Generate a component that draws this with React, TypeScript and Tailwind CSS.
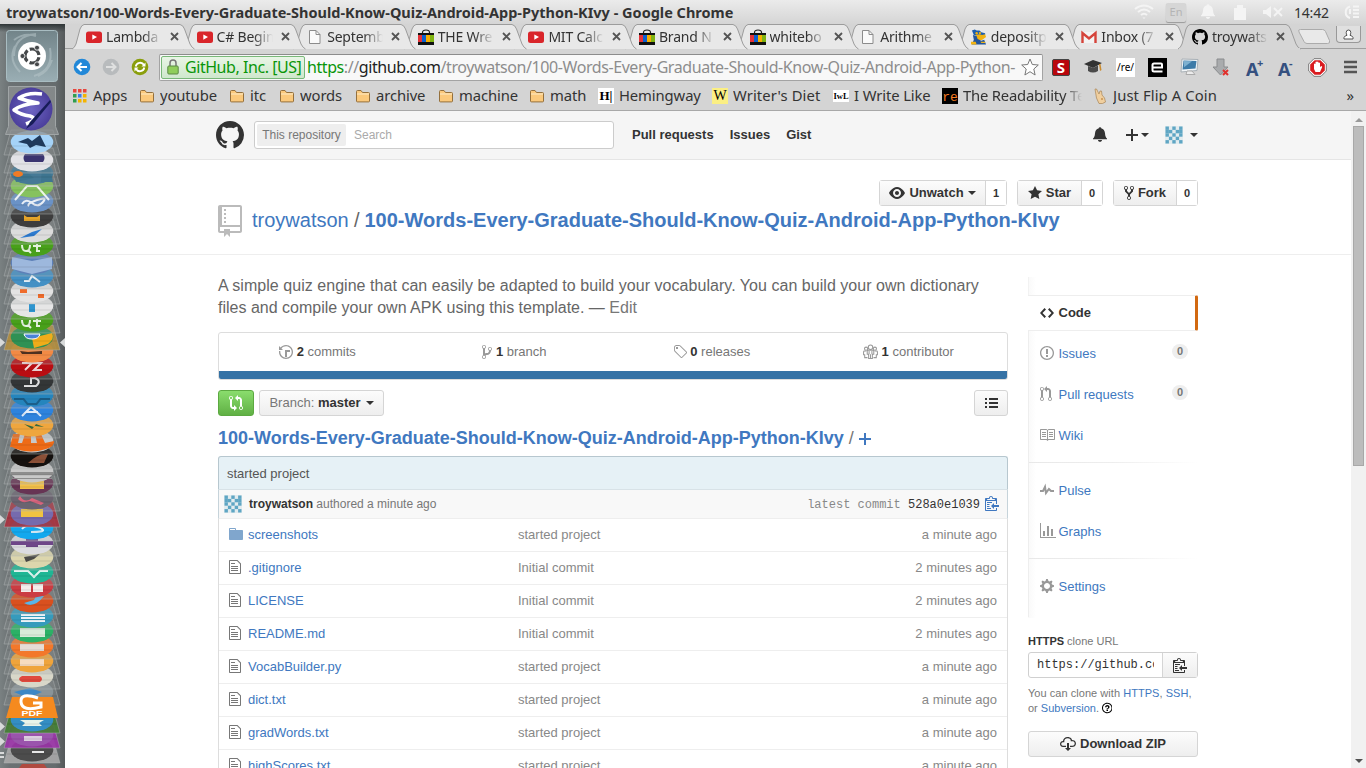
import React from "react";

const P = {
  mark: "M8 0C3.58 0 0 3.58 0 8c0 3.54 2.29 6.53 5.47 7.59.4.07.55-.17.55-.38 0-.19-.01-.82-.01-1.49-2.01.37-2.53-.49-2.69-.94-.09-.23-.48-.94-.82-1.13-.28-.15-.68-.52-.01-.53.63-.01 1.08.58 1.23.82.72 1.21 1.87.87 2.33.66.07-.52.28-.87.51-1.07-1.78-.2-3.64-.89-3.64-3.95 0-.87.31-1.59.82-2.15-.08-.2-.36-1.02.08-2.12 0 0 .67-.21 2.2.82.64-.18 1.32-.27 2-.27.68 0 1.36.09 2 .27 1.53-1.04 2.2-.82 2.2-.82.44 1.1.16 1.92.08 2.12.51.56.82 1.27.82 2.15 0 3.07-1.87 3.75-3.65 3.95.29.25.54.73.54 1.48 0 1.07-.01 1.93-.01 2.2 0 .21.15.46.55.38A8.013 8.013 0 0 0 16 8c0-4.42-3.58-8-8-8z",
  repo: "M4 9H3V8h1v1zm0-3H3v1h1V6zm0-2H3v1h1V4zm0-2H3v1h1V2zm8-1v12c0 .55-.45 1-1 1H6v2l-1.5-1.5L3 16v-2H1c-.55 0-1-.45-1-1V1c0-.55.45-1 1-1h10c.55 0 1 .45 1 1zm-1 10H1v2h2v-1h3v1h5v-2zm0-10H2v9h9V1z",
  eye: "M8.06 2C3 2 0 8 0 8s3 6 8.06 6C13 14 16 8 16 8s-3-6-7.94-6zM8 12c-2.2 0-4-1.78-4-4 0-2.2 1.8-4 4-4 2.22 0 4 1.8 4 4 0 2.22-1.78 4-4 4zm2-4c0 1.11-.89 2-2 2-1.11 0-2-.89-2-2 0-1.11.89-2 2-2 1.11 0 2 .89 2 2z",
  star: "M14 6l-4.9-.64L7 1 4.9 5.36 0 6l3.6 3.26L2.67 14 7 11.67 11.33 14l-.93-4.74z",
  fork: "M8 1a1.993 1.993 0 0 0-1 3.72V6L5 8 3 6V4.72A1.993 1.993 0 0 0 2 1a1.993 1.993 0 0 0-1 3.72V6.5l3 3v1.78A1.993 1.993 0 0 0 5 15a1.993 1.993 0 0 0 1-3.72V9.5l3-3V4.72A1.993 1.993 0 0 0 8 1zM2 4.2C1.34 4.2.8 3.65.8 3c0-.65.55-1.2 1.2-1.2.65 0 1.2.55 1.2 1.2 0 .65-.55 1.2-1.2 1.2zm3 10c-.66 0-1.2-.55-1.2-1.2 0-.65.55-1.2 1.2-1.2.65 0 1.2.55 1.2 1.2 0 .65-.55 1.2-1.2 1.2zm3-10c-.66 0-1.2-.55-1.2-1.2 0-.65.55-1.2 1.2-1.2.65 0 1.2.55 1.2 1.2 0 .65-.55 1.2-1.2 1.2z",
  bell: "M0 12.2v-.8c1.2-1 1.8-2.2 2-5.2C2.2 3.4 3.6 1.9 5.5 1.4 5.7.6 6.2.2 7 .2s1.3.4 1.5 1.2C10.4 1.9 11.8 3.4 12 6.2c.2 3 .8 4.2 2 5.2v.8zM5 13h4c0 1-.8 1.8-2 1.8S5 14 5 13z",
  plus: "M12 9H7v5H5V9H0V7h5V2h2v5h5v2z",
  branch: "M10 5c0-1.11-.89-2-2-2a1.993 1.993 0 0 0-1 3.72v.3c-.02.52-.23.98-.63 1.38-.4.4-.86.61-1.38.63-.83.02-1.48.16-2 .45V4.72a1.993 1.993 0 0 0-1-3.72C.88 1 0 1.89 0 3a2 2 0 0 0 1 1.72v6.56c-.59.35-1 .99-1 1.72 0 1.11.89 2 2 2 1.11 0 2-.89 2-2 0-.53-.2-1-.53-1.36.09-.06.48-.41.59-.47.25-.11.56-.17.94-.17 1.05-.05 1.95-.45 2.75-1.25S8.95 7.77 9 6.73h-.02C9.59 6.37 10 5.73 10 5zM2 1.8c.66 0 1.2.55 1.2 1.2 0 .65-.55 1.2-1.2 1.2C1.35 4.2.8 3.65.8 3c0-.65.55-1.2 1.2-1.2zm0 12.41c-.66 0-1.2-.55-1.2-1.2 0-.65.55-1.2 1.2-1.2.65 0 1.2.55 1.2 1.2 0 .65-.55 1.2-1.2 1.2zm6-8c-.66 0-1.2-.55-1.2-1.2 0-.65.55-1.2 1.2-1.2.65 0 1.2.55 1.2 1.2 0 .65-.55 1.2-1.2 1.2z",
  pull: "M11 11.28V5c-.03-.78-.34-1.47-.94-2.06C9.46 2.35 8.78 2.03 8 2H7V0L4 3l3 3V4h1c.27.02.48.11.69.31.21.2.3.42.31.69v6.28A1.993 1.993 0 0 0 10 15a1.993 1.993 0 0 0 1-3.72zm-1 2.92c-.66 0-1.2-.55-1.2-1.2 0-.65.55-1.2 1.2-1.2.65 0 1.2.55 1.2 1.2 0 .65-.55 1.2-1.2 1.2zM4 3c0-1.11-.89-2-2-2a1.993 1.993 0 0 0-1 3.72v6.56A1.993 1.993 0 0 0 2 15a1.993 1.993 0 0 0 1-3.72V4.72c.59-.34 1-.98 1-1.72zm-.8 10c0 .66-.55 1.2-1.2 1.2-.65 0-1.2-.55-1.2-1.2 0-.65.55-1.2 1.2-1.2.65 0 1.2.55 1.2 1.2zM2 4.2C1.34 4.2.8 3.65.8 3c0-.65.55-1.2 1.2-1.2.65 0 1.2.55 1.2 1.2 0 .65-.55 1.2-1.2 1.2z",
  compare: "M5 12H4c-.27-.02-.48-.11-.69-.31-.21-.2-.3-.42-.31-.69V4.72A1.993 1.993 0 0 0 2 1a1.993 1.993 0 0 0-1 3.72V11c.03.78.34 1.47.94 2.06.6.59 1.28.91 2.06.94h1v2l3-3-3-3v2zM2 1.8c.66 0 1.2.55 1.2 1.2 0 .65-.55 1.2-1.2 1.2C1.35 4.2.8 3.65.8 3c0-.65.55-1.2 1.2-1.2zm11 9.48V5c-.03-.78-.34-1.47-.94-2.06-.6-.59-1.28-.91-2.06-.94H9V0L6 3l3 3V4h1c.27.02.48.11.69.31.21.2.3.42.31.69v6.28A1.993 1.993 0 0 0 12 15a1.993 1.993 0 0 0 1-3.72zm-1 2.92c-.66 0-1.2-.55-1.2-1.2 0-.65.55-1.2 1.2-1.2.65 0 1.2.55 1.2 1.2 0 .65-.55 1.2-1.2 1.2z",
  tag: "M7.73 1.73C7.26 1.26 6.62 1 5.96 1H3.5C2.13 1 1 2.13 1 3.5v2.47c0 .66.27 1.3.73 1.77l6.06 6.06c.39.39 1.02.39 1.41 0l4.59-4.59a.996.996 0 0 0 0-1.41L7.73 1.73zM2.38 7.09c-.31-.3-.47-.7-.47-1.13V3.5c0-.88.72-1.59 1.59-1.59h2.47c.42 0 .83.16 1.13.47l6.14 6.13-4.73 4.73-6.13-6.15zM3.01 3h2v2H3V3h.01z",
  list: "M0 3h2v2H0zM4 3h9v2H4zM0 7h2v2H0zM4 7h9v2H4zM0 11h2v2H0zM4 11h9v2H4z",
  file: "M6 5H2V4h4v1zM2 8h7V7H2v1zm0 2h7V9H2v1zm0 2h7v-1H2v1zm10-7.5V14c0 .55-.45 1-1 1H1c-.55 0-1-.45-1-1V2c0-.55.45-1 1-1h7.5L12 4.5zM11 5L8 2H1v12h10V5z",
  dir: "M13 4H7V3c0-.66-.31-1-1-1H1c-.55 0-1 .45-1 1v10c0 .55.45 1 1 1h12c.55 0 1-.45 1-1V5c0-.55-.45-1-1-1zM6 4H1V3h5v1z",
  code: "M9.5 3L8 4.5 11.5 8 8 11.5 9.5 13 14 8 9.5 3zm-5 0L0 8l4.5 5L6 11.5 2.5 8 6 4.5 4.5 3z",
  issue: "M7 2.3c3.14 0 5.7 2.56 5.7 5.7s-2.56 5.7-5.7 5.7A5.71 5.71 0 0 1 1.3 8c0-3.14 2.56-5.7 5.7-5.7zM7 1C3.14 1 0 4.14 0 8s3.14 7 7 7 7-3.14 7-7-3.14-7-7-7zm1 3H6v5h2V4zm0 6H6v2h2v-2z",
  book: "M2 5h4v1H2V5zm0 3h4V7H2v1zm0 2h4V9H2v1zm11-5H9v1h4V5zm0 2H9v1h4V7zm0 2H9v1h4V9zm2-6v9c0 .55-.45 1-1 1H8.5l-1 1-1-1H1c-.55 0-1-.45-1-1V3c0-.55.45-1 1-1h5.5l1 1 1-1H14c.55 0 1 .45 1 1zm-8 .5L6.5 3H1v9h6V3.5zm7-.5H8.500l-.5.5V12h6V3z",
  pulse: "M11.5 8L8.8 5.4 6.6 8.5 5.5 1.6 2.38 8H0v2h3.6l.9-1.8.9 5.4L9 8.5l1.6 1.5H14V8h-2.5z",
  graph: "M16 14v1H0V0h1v14h15zM5 13H3V8h2v5zm4 0H7V3h2v10zm4 0h-2V6h2v7z",
  gear: "M14 8.77v-1.6l-1.94-.64-.45-1.09.88-1.84-1.13-1.13-1.81.91-1.09-.45-.69-1.92h-1.6l-.63 1.94-1.11.45-1.84-.88-1.13 1.13.91 1.81-.45 1.09L0 7.23v1.59l1.94.64.45 1.09-.88 1.84 1.13 1.13 1.81-.91 1.09.45.69 1.92h1.59l.63-1.94 1.11-.45 1.84.88 1.13-1.13-.92-1.81.47-1.09L14 8.75v.02zM7 11c-1.66 0-3-1.34-3-3s1.34-3 3-3 3 1.34 3 3-1.34 3-3 3z",
  clippy: "M2 13h4v1H2v-1zm5-6H2v1h5V7zm2 3V8l-3 3 3 3v-2h5v-2H9zM4.5 9H2v1h2.5V9zM2 12h2.5v-1H2v1zm9 1h1v2c-.02.28-.11.52-.3.7-.19.18-.42.28-.7.3H1c-.55 0-1-.45-1-1V4c0-.55.45-1 1-1h3c0-1.11.89-2 2-2 1.11 0 2 .89 2 2h3c.55 0 1 .45 1 1v5h-1V6H1v9h10v-2zM2 5h8c0-.55-.45-1-1-1H8c-.55 0-1-.45-1-1s-.45-1-1-1-1 .45-1 1-.45 1-1 1H3c-.55 0-1 .45-1 1z",
  cloud: "M9 12h2l-3 3-3-3h2V7h2v5zm3-8c0-.44-.91-3-4.5-3C5.08 1 3 2.92 3 5 1.02 5 0 6.52 0 8c0 1.53 1 3 3 3h3V9.7H3C1.38 9.7 1.3 8.28 1.3 8c0-.17.05-1.7 1.7-1.7h1.3V5c0-1.39 1.56-2.7 3.2-2.7 2.55 0 3.13 1.55 3.2 1.8v1.2H12c.81 0 2.7.22 2.7 2.2 0 2.09-2.25 2.2-2.7 2.2h-2V11h2c2.08 0 4-1.16 4-3.5C16 5.06 14.08 4 12 4z",
  question: "M6 10h2v2H6v-2zm4-3.5C10 8.64 8 9 8 9H6c0-.55.45-1 1-1h.5c.28 0 .5-.22.5-.5v-1c0-.28-.22-.5-.5-.5h-1c-.28 0-.5.22-.5.5V7H4c0-1.5 1.5-3 3-3s3 1 3 2.5zM7 2.3c3.14 0 5.7 2.56 5.7 5.7s-2.56 5.7-5.7 5.7A5.71 5.71 0 0 1 1.3 8c0-3.14 2.56-5.7 5.7-5.7zM7 1C3.14 1 0 4.14 0 8s3.14 7 7 7 7-3.14 7-7-3.14-7-7-7z",
  history: "M8 13H6V6h5v2H8v5zM7 1C4.81 1 2.87 2.02 1.59 3.59L0 2v4h4L2.5 4.5C3.55 3.17 5.17 2.3 7 2.3c3.14 0 5.7 2.56 5.7 5.7s-2.56 5.7-5.7 5.7A5.71 5.71 0 0 1 1.3 8c0-.34.03-.67.09-1H.08C.03 7.33 0 7.66 0 8c0 3.86 3.14 7 7 7s7-3.14 7-7-3.14-7-7-7z",
};

function Oct({ d, w = 14, s = 1, className = "" }: { d: string; w?: number; s?: number; className?: string }) {
  return (
    <svg width={w * s} height={16 * s} viewBox={`0 0 ${w} 16`} fill="currentColor" className={`shrink-0 ${className}`}>
      <path d={d} fillRule="evenodd" />
    </svg>
  );
}

function People() {
  return (
    <svg width="15" height="16" viewBox="0 0 16 16" fill="none" stroke="#999" strokeWidth="1.1" className="shrink-0">
      <circle cx="8" cy="3" r="2.4" />
      <circle cx="3.3" cy="4.5" r="1.7" />
      <circle cx="12.7" cy="4.5" r="1.7" />
      <path d="M4.5 10.5V7q0-1 1.5-1h4q1.5 0 1.5 1v3.5H10V15H6v-4.5zM8 10.5V15M6.5 7v3.5M9.5 7v3.5M3.5 7H1.500Q.6 7 .6 8v3h1.200v3h3M12.500 7h2q.9 0 .9 1v3h-1.200v3h-3" />
    </svg>
  );
}

function Caret() {
  return <span className="inline-block border-x-4 border-t-4 border-x-transparent border-t-[#333]" />;
}

const avatar = ["10101", "11011", "10101", "01010", "10101"];
function Identicon() {
  return (
    <svg width="18" height="18" viewBox="0 0 18 18">
      <rect width="18" height="18" fill="#e3ecef" />
      <g fill="#5fa6c4">
        {avatar.map((r, y) =>
          r.split("").map((c, x) => (c === "1" ? <rect key={`${x}-${y}`} x={0.5 + x * 3.4} y={0.5 + y * 3.4} width="3.4" height="3.4" /> : null))
        )}
      </g>
    </svg>
  );
}

/* ---------- favicons ---------- */
function YouTube() {
  return (
    <svg width="16" height="16" viewBox="0 0 16 16">
      <rect x="0" y="2.5" width="16" height="11.5" rx="2.5" fill="#d9252a" />
      <path d="M6.3 5.5v5.2L11 8.1z" fill="#fff" />
    </svg>
  );
}
function Page() {
  return (
    <svg width="16" height="16" viewBox="0 0 16 16" fill="#fafafa" stroke="#8c8c8c">
      <path d="M2.5 1.5H9l4 4v9H2.500z" />
      <path d="M9 1.5v4h4" fill="none" />
    </svg>
  );
}
function Bag() {
  return (
    <svg width="16" height="16" viewBox="0 0 16 16">
      <path d="M4.5 5V3.5Q4.5 1 8 1t3.5 2.5V5" fill="none" stroke="#222" strokeWidth="1.2" />
      <rect y="4" width="16" height="2" fill="#111" />
      <rect y="6" width="4" height="7" fill="#e53238" />
      <rect x="4" y="6" width="4" height="7" fill="#0a5fd0" />
      <rect x="8" y="6" width="4" height="7" fill="#f5af02" />
      <rect x="12" y="6" width="4" height="7" fill="#7fb311" />
      <rect y="13" width="16" height="3" fill="#111" />
    </svg>
  );
}
function HostGator() {
  return (
    <svg width="16" height="16" viewBox="0 0 17 16">
      <path d="M1 1l3-1 2 1h3l2 2 4 1v2l-7 1-5-1z" fill="#1c5fb0" />
      <path d="M5 6l4-1 3 1 3-1 1 3-4 3-5 1z" fill="#f2b311" />
      <path d="M2 6l4 1 1 3 4 2 3-1 2 5H1l2-5z" fill="#24569c" />
      <path d="M0 13h5l1 3H0zM10 13h5v1.500h-4z" fill="#f2b311" />
      <circle cx="6" cy="4" r="1.3" fill="#f2b311" />
      <circle cx="9.5" cy="3.8" r="1.2" fill="#f2b311" />
    </svg>
  );
}
function Gmail() {
  return (
    <svg width="16" height="16" viewBox="0 0 16 16">
      <rect x="1" y="3" width="14" height="11" fill="#f3f3f3" />
      <path d="M1.5 14V4L8 9.5 14.5 4v10" fill="none" stroke="#d5433a" strokeWidth="2.4" />
    </svg>
  );
}

const tabs: { icon: React.ReactNode; label: string }[] = [
  { icon: <YouTube />, label: "Lambda" },
  { icon: <YouTube />, label: "C# Begin" },
  { icon: <Page />, label: "Septemb" },
  { icon: <Bag />, label: "THE Wre" },
  { icon: <YouTube />, label: "MIT Calc" },
  { icon: <Bag />, label: "Brand N" },
  { icon: <Bag />, label: "whitebo" },
  { icon: <Page />, label: "Arithme" },
  { icon: <HostGator />, label: "depositp" },
  { icon: <Gmail />, label: "Inbox (7" },
  { icon: <Oct d={P.mark} w={16} className="text-black" />, label: "troywats" },
];
const Z = ["z-[11]", "z-10", "z-[9]", "z-[8]", "z-[7]", "z-[6]", "z-[5]", "z-[4]", "z-[3]", "z-[2]", "z-20"];

function Tab({ i, icon, label }: { i: number; icon: React.ReactNode; label: string }) {
  const active = i === 10;
  return (
    <div className={`relative h-[25px] w-[110.6px] shrink-0 ${Z[i]}`}>
      <svg className="absolute left-0 top-0 overflow-visible" width="124" height="25">
        <path
          d="M0 25 Q2.5 24 4 20 L8 5 Q9.5 1 12 .5 H108 Q111 1 112.5 5 L118 20 Q120 24 122.5 25"
          fill={active ? "#d6d6d6" : "#e8e8e8"}
          stroke="#9c9c9c"
        />
        {active && <path d="M1 25h121" stroke="#d6d6d6" strokeWidth="2" />}
      </svg>
      <div className="relative flex h-full items-center pl-[14px]">
        {icon}
        <span className="ml-1 w-[56px] overflow-hidden whitespace-nowrap tracking-[-0.2px] [mask-image:linear-gradient(to_right,#000_65%,transparent)]">{label}</span>
        <svg width="9" height="9" viewBox="0 0 9 9" className="ml-[8px]">
          <path d="M1 1l7 7M8 1L1 8" stroke="#555" strokeWidth="1.8" />
        </svg>
      </div>
    </div>
  );
}

function Folder() {
  return (
    <svg width="16" height="16" viewBox="0 0 16 16">
      <path d="M1.5 13V3.5q0-1 1-1H6l1.5 2h6q1 0 1 1V13q0 .9-1 .9h-11q-1 0-1-.9z" fill="#fbc97c" stroke="#94703d" />
      <path d="M2 6h12" stroke="#fdebc8" />
    </svg>
  );
}
function AppsIcon() {
  const c = ["#e8453c", "#e8453c", "#e8453c", "#2f9e4f", "#3b7ded", "#f4b400", "#2f9e4f", "#f4b400", "#f4b400"];
  return (
    <svg width="14" height="14" viewBox="0 0 14 14" className="ml-px">
      {c.map((f, i) => (
        <rect key={i} x={(i % 3) * 5} y={Math.floor(i / 3) * 5} width="3.5" height="3.5" fill={f} />
      ))}
    </svg>
  );
}
const bookmarks: { icon: React.ReactNode; label: string; w: string; t?: string }[] = [
  { icon: <AppsIcon />, label: "Apps", w: "w-[67px]" },
  { icon: <Folder />, label: "youtube", w: "w-[90px]" },
  { icon: <Folder />, label: "itc", w: "w-[50px]" },
  { icon: <Folder />, label: "words", w: "w-[76px]" },
  { icon: <Folder />, label: "archive", w: "w-[83px]" },
  { icon: <Folder />, label: "machine", w: "w-[91px]" },
  { icon: <Folder />, label: "math", w: "w-[69px]" },
  { icon: <span className="block h-4 w-4 bg-white text-center font-[Liberation_Serif,serif] text-[13px] font-bold leading-4 text-black">H|</span>, label: "Hemingway", w: "w-[114px]" },
  { icon: <span className="block h-4 w-4 bg-[#fbef84] text-center font-[Liberation_Serif,serif] text-[14px] leading-4 text-black">W</span>, label: "Writer's Diet", w: "w-[121px]", t: "tracking-[0.1px]" },
  { icon: <span className="block h-3 w-4 bg-white text-center font-[Liberation_Serif,serif] text-[8.5px] font-bold leading-3 text-black">IwL</span>, label: "I Write Like", w: "w-[109px]" },
  { icon: <span className="block h-4 w-4 bg-black pt-1 text-center font-[Liberation_Mono,monospace] text-[13px] leading-3 text-[#f47a20]">re</span>, label: "The Readability Te", w: "w-[150px]", t: "tracking-[-0.2px] [mask-image:linear-gradient(to_right,#000_85%,transparent)]" },
  {
    icon: (
      <svg width="16" height="16" viewBox="0 0 16 16">
        <path d="M3 1l1.5 0L7 6l1-3 1.5 0 .5 4 2.5 3 1 4-3 1.5H7L4.5 10z" fill="#f0cf9f" stroke="#a98556" strokeWidth=".7" />
        <circle cx="10" cy="11" r="1" fill="#c9924f" />
      </svg>
    ),
    label: "Just Flip A Coin",
    w: "w-[140px]",
    t: "tracking-[0.1px]",
  },
];

/* ---------- Unity launcher: [centre y, fill, "art path|art fill", glow] ---------- */
const stack: [number, string, string, string?][] = [
  [142, "#a5d3f8", "M18 142l10-4 4 3 8-6 6 12-10-2-6 3-3-4z|#1f3a5c"],
  [160, "#e2e2e6", "M25 154h18q3 4 0 8H25q-3-4 0-8z|#3a3470"],
  [173, "#467a96", "M12 170h12l10 8-18 4zM42 168h8l3 14H41z|#3e7590"],
  [186, "#86c25f", "M15 200l12-14h10l12 14|none"],
  [201, "#6a92c6", "M22 204q4-6 10-1t11-1-6-2-8 6|none"],
  [216, "#3d3d3d", "M24 215l3 2h10l3-2v6H24z|#e6a52a"],
  [231, "#dcdcdc", "M20 238l12-6 10-3-8 7z|#2d7bd0"],
  [245, "#48a01a", "M22 245q0 6 4 6t4-6M28 250l3 3M33 246h8M37 244v7h3|none"],
  [263, "#5d80b8", "M12 257l20 4 20-4v12l-20 5-20-5z|#9db8dd"],
  [276, "#4390c4", "M24 281h5l3-5 8 6|none"],
  [291, "#e3e3e3", "M20 289h7v4h-7zM38 294h6v4h-6z|#ef6c2c"],
  [306, "#e6e6e6", "M29 304h6v8h-6z|#2f95cf"],
  [320, "#48a01a", "M22 320q0 6 4 6t4-6M28 325l3 3M33 321h8M37 319v7h3|none"],
  [337, "#2f9154", "M32 338L52 333q3 6-4 11l-14 4z|#f0ac1a", "#b58f3f"],
  [351, "#f28a45", "M20 351l8 1 14-1v3H22z|#4d3020"],
  [366, "#b90d12", "M22 363h10l-7 7M33 363h8l-7 7h8|none"],
  [381, "#333637", "M24 386h12q6-5-1-8h-4v6|none"],
  [395, "#2585bd", "M14 398h10l4 5h8l4-5h10v2H41l-4 5H27l-4-5h-9z|#1c5f8a"],
  [410, "#2e83dd", "M22 416l9-9 10 9M26 412h12|none"],
  [425, "#efa63e", "M24 424l10 3 2-3 8 3-9-1-3 3z|#35683e"],
  [441, "#c7c9cb", "M10 447l3-13h7l-2 9h4l3-9h6v9h6l-2-9h6l4 9 9-2q1 5-8 8-18 6-34-2z|#ee6b17"],
  [456, "#15110f", "M28 463q10-10 20-9l-4 9z|#8b5037"],
  [471, "#c8c8c8", "M11 472h42v3H11zM12 478h40v1H12z|#8d8d8d"],
  [483, "#673454", "M20 481h24v8H20z|#f3c04a"],
  [498, "#6b6470", "M20 496q5 8 12 2l12 5-3 2-11-4q-8 3-12-2z|#d9657e"],
  [514, "#766bad", "M21 509h22v8H21z|#f0c341", "#a8323f"],
  [528, "#13a8ee", "M22 529q4-5 12-3t9 4-12 2|none"],
  [543, "#dcdce0", "M11 541h42v4H11zM26 539h12v8H26z|#6e4688"],
  [557, "#dcd6ad", "M24 557l16-3-6 5-8 3z|#4b4a48"],
  [572, "#1fb694", "M14 571h14l6 6 6-6h8|none"],
  [586, "#cb3c42", "M21 584h10v8H21zM33 584h10v8H33z|#f5eceb"],
  [601, "#d9501f", "M24 603q10 6 20-7l-8 0-2 4z|#58b5e8"],
  [616, "#369bbc", "M21 614h24v2H21zM21 617h24v2H21zM21 620h24v2H21z|#eaf3f8"],
  [631, "#2cb166", "M20 628h25v9H20z|#d8ecd9"],
  [646, "#f3782b", "M20 644h24v7H20z|#e6dcd5"],
  [661, "#efa43c", "M20 659h24v7H20z|#f6dcc0"],
  [676, "#d8d7c9", "M22 676h18q4 3 0 6H22q-6-3 0-6z|#e0493e"],
  [692, "#8a9498", "M14 692l16-4 12 4-14 6z|#3c87c5"],
  [720, "#348ec3", "M20 720h24l-5 3 3 3H22l3-3z|#e8f4ea", "#437f32"],
  [735, "#9a54ac", "M24 736h18v5H24z|#dccde0", "#9b34a8"],
  [750, "#4c4c4c", "M32 751h12v2H32z|#e6e6e6", "#a9a9a9"],
];

function Launcher() {
  return (
    <svg width="65" height="744" viewBox="0 24 65 744" className="block">
      <defs>
        <linearGradient id="lb" x1="0" x2="1">
          <stop offset="0" stopColor="#7a8182" />
          <stop offset=".15" stopColor="#6b7173" />
          <stop offset=".85" stopColor="#666c6e" />
          <stop offset="1" stopColor="#55595a" />
        </linearGradient>
        <linearGradient id="sh" x1="0" x2="0" y1="0" y2="1">
          <stop offset="0" stopColor="#2e3536" />
          <stop offset="1" stopColor="#2e3536" stopOpacity="0" />
        </linearGradient>
        <linearGradient id="tile" x1="0" x2="0" y1="0" y2="1">
          <stop offset="0" stopColor="#728489" />
          <stop offset="1" stopColor="#9aaeb4" />
        </linearGradient>
        <radialGradient id="em">
          <stop offset="0" stopColor="#6f66c4" />
          <stop offset="1" stopColor="#4b3f9c" />
        </radialGradient>
      </defs>
      <rect y="24" width="65" height="744" fill="url(#lb)" />
      <rect y="24" width="65" height="8" fill="url(#sh)" />
      <rect x="6.5" y="30.5" width="51" height="51" rx="3" fill="url(#tile)" stroke="#a9bdc2" />
      <g fill="none" stroke="#b6c5c9" strokeWidth="2" opacity=".55">
        <path d="M14 56q0-20 22-22M50 48q4 22-16 28M14 40q10-8 22-4M20 72Q8 60 15 46M52 60q-4 12-14 16" />
      </g>
      <circle cx="32" cy="56" r="14" fill="#fff" />
      <circle cx="32" cy="56" r="7" fill="none" stroke="#45484a" strokeWidth="3.2" strokeDasharray="12.2 2.46" strokeDashoffset="-1.2" />
      <g fill="#45484a" stroke="#fff" strokeWidth=".8">
        <circle cx="22.5" cy="56" r="2.5" />
        <circle cx="37" cy="47.7" r="2.5" />
        <circle cx="37" cy="64.3" r="2.5" />
      </g>
      <path d="M22 764h22l3 4H19z" fill="#b04a40" />
      {stack
        .map(([y, color, art, glow], i) => {
          const [d, f] = art.split("|");
          return (
            <g key={i}>
              <path d={`M11 ${y - 12}H53L60 ${y + 13}H4z`} fill={glow ?? "#9a9fa0"} fillOpacity={glow ? 0.9 : 0.22} stroke="#b4b8b9" strokeOpacity=".45" />
              <ellipse cx="32" cy={y} rx="21.3" ry="11.5" fill={color} />
              {f === "none" ? <path d={d} fill="none" stroke="#fff" strokeOpacity=".85" strokeWidth="2" /> : <path d={d} fill={f} />}
              <path d={`M7 ${y + 4}h50`} stroke="#000" strokeOpacity=".1" />
            </g>
          );
        })
        .reverse()}
      <ellipse cx="18" cy="174" rx="5" ry="3" fill="#f07b26" />
      <path d="M12 697h41l5 21H6z" fill="#f58a1f" />
      <path d="M38 698q-18-6-17 4t20 5v-4h-8" fill="none" stroke="#fff" strokeWidth="3" />
      <text x="32" y="716" textAnchor="middle" fontFamily="Liberation Sans, sans-serif" fontWeight="bold" fontSize="7.5" fill="#fff" textLength="21" lengthAdjust="spacingAndGlyphs">
        PDF
      </text>
      <path d="M24 334q1 5 8 5t8-5z" fill="#4a83d8" stroke="#fff" />
      <path d="M8.5 86.5h47v40l3 8h-53l3-8z" fill="#8d9293" fillOpacity=".75" stroke="#a0a5a6" />
      <circle cx="31" cy="109" r="21.5" fill="url(#em)" />
      <path d="M42 94q-14-2-23 4 10 4 19 5-16 1-24 7 7 5 16 6 9 3-4 8" fill="none" stroke="#fff" strokeWidth="3.6" strokeLinejoin="round" />
      <path d="M26 129l4-7 20-22 1 2-18 22z" fill="#171c58" />
      <g fill="#d8dada">
        <path d="M0 338l5 4.5-5 4.5zM65 338l-5 4.5 5 4.5zM0 515l5 4.5-5 4.5zM0 722l5 4.5-5 4.5zM0 737l5 4.5-5 4.5z" />
        <path d="M0 752h4v2H0zM0 756h4v2H0z" />
      </g>
    </svg>
  );
}

/* ---------- top panel ---------- */
function TopBar() {
  return (
    <div className="flex h-6 shrink-0 items-center bg-linear-to-b from-[#ebebeb] to-[#d5d5d5] pl-[6px] pr-[6px]">
      <span className="whitespace-nowrap pb-px text-[14.5px] font-bold leading-[22px] text-[#333]">
        troywatson/100-Words-Every-Graduate-Should-Know-Quiz-Android-App-Python-KIvy - Google Chrome
      </span>
      <div className="ml-auto flex items-center text-[#f4f4f4]">
        <svg width="20" height="16" viewBox="0 0 20 16" fill="none" stroke="currentColor" strokeWidth="2">
          <path d="M1 5q9-7 18 0M4 8q6-5 12 0M7 11q3-2.5 6 0" />
          <path d="M8.5 13.5h3L10 15z" fill="currentColor" stroke="none" />
        </svg>
        <span className="ml-3 flex h-[19px] w-5 items-center justify-center rounded-[2px] bg-[#d6d6d6] text-[11px] text-[#b4b4b4] shadow-[0_1px_1px_#999]">En</span>
        <Oct d={P.bell} className="ml-[15px]" />
        <svg width="14" height="16" viewBox="0 0 14 16" fill="currentColor" className="ml-[18px]">
          <path d="M1 4h3V1h6v3h3v12H1z" />
        </svg>
        <svg width="20" height="14" viewBox="0 0 20 14" fill="currentColor" className="ml-[16px]">
          <path d="M0 5h3l5-4v12L3 9H0z" />
          <path d="M11 3l8 8M19 3l-8 8" stroke="currentColor" strokeWidth="1.8" />
        </svg>
        <span className="ml-[11px] w-[36px] whitespace-nowrap text-[14px] tracking-[-0.2px] text-[#333]">14:42</span>
        <svg width="17" height="16" viewBox="0 0 17 16" fill="none" stroke="currentColor" strokeWidth="2" className="ml-[13px]">
          <path d="M7 2.5A6 6 0 0 0 7 14M7 5v5M10 2.5h6M10 6h6M10 9.5h6M10 13h6" />
        </svg>
      </div>
    </div>
  );
}

function Toolbar() {
  return (
    <div className="flex h-[37px] items-center pb-px pl-[8px] pr-[9px]">
      <svg width="80" height="18" viewBox="0 0 80 18">
        <circle cx="9" cy="9" r="8.3" fill="#2288d8" />
        <path d="M14 9H5M8.5 5L4.5 9l4 4" stroke="#fff" strokeWidth="2" fill="none" />
        <circle cx="38" cy="9" r="8.3" fill="#b8bbbd" />
        <path d="M33 9h9M38.5 5l4 4-4 4" stroke="#dfe0e0" strokeWidth="2" fill="none" />
        <circle cx="67" cy="9" r="8.3" fill="#8a9e0c" />
        <path d="M62.7 8.5A4.5 4.5 0 0 1 71 7M71.3 9.5A4.5 4.5 0 0 1 63 11" stroke="#fff" strokeWidth="1.8" fill="none" />
        <path d="M72.5 4.5v4h-4zM61.5 13.5v-4h4z" fill="#fff" />
      </svg>
      <div className="ml-[6px] flex h-[27px] w-[884px] items-center rounded-[2px] border border-[#a3a3a3] border-t-[#8c8c8c] bg-[#f8f8f8] pl-[1px] pr-[3px] text-[16px]">
        <div className="flex h-[23px] w-[144px] shrink-0 items-center rounded-[2px] border border-[#79b879] bg-linear-to-b from-[#e9f5e6] to-[#cfe8cd] pl-[5px] text-[#0a9509]">
          <svg width="12" height="16" viewBox="0 0 12 16">
            <path d="M3 7V4q0-3 3-3t3 3v3" fill="none" stroke="#777" strokeWidth="1.5" />
            <rect x=".8" y="7" width="10.4" height="8" rx="1" fill="#8fce5b" stroke="#5a8a45" />
          </svg>
          <span className="ml-[6px] whitespace-nowrap tracking-[-0.45px]">GitHub, Inc. [US]</span>
        </div>
        <span className="ml-[2px] w-[711px] overflow-hidden whitespace-nowrap tracking-[-0.42px] text-[#8d8d8d]">
          <span className="text-[#0a9509]">https</span>://<span className="text-[#222]">github.com</span>
          /troywatson/100-Words-Every-Graduate-Should-Know-Quiz-Android-App-Python-
        </span>
        <svg width="18" height="18" viewBox="0 0 18 18" className="ml-auto shrink-0">
          <path d="M9 1l2.3 5.5 6 .5-4.5 4 1.3 6L9 13.700 3.900 17l1.300-6L.7 7l6-.5z" fill="#fff" stroke="#777" />
        </svg>
      </div>
      <span className="ml-[9px] flex h-[17px] w-[18px] items-center justify-center rounded-[2px] border border-[#444] bg-[#b8060c] text-[15px] font-bold text-white">S</span>
      <svg width="18" height="14" viewBox="0 0 18 14" className="ml-[14px]">
        <path d="M0 4l9-4 9 3-9 5z" fill="#333" />
        <path d="M4 6v5q5 3 10 0V5.5L9 8z" fill="#4a4a4a" />
        <path d="M15 4l1 7 1.5-1-1-6z" fill="#c98b30" />
      </svg>
      <span className="ml-[14px] flex h-[19px] w-[19px] items-center justify-center bg-white text-[10px] text-black">/re/</span>
      <span className="ml-[13px] flex h-[19px] w-[19px] items-center justify-center bg-black">
        <svg width="13" height="11" viewBox="0 0 13 11" fill="none" stroke="#fff" strokeWidth="2">
          <path d="M1.5 5.5H11V2.5q0-1-1-1H3q-1.5 0-1.5 1.5v5q0 1.5 1.5 1.5h8.500" />
        </svg>
      </span>
      <svg width="19" height="18" viewBox="0 0 19 18" className="ml-[13px]">
        <path d="M2 1l16 .5-1 11L1 14z" fill="#f2f5f7" stroke="#a8b0b6" />
        <path d="M3.5 2.5l13 .5-1 7.5-13 1z" fill="#3d7ba8" />
        <path d="M4 3l8 .3-8 6z" fill="#7db0d0" />
        <path d="M7 13h5l3 3.5H6z" fill="#ececec" stroke="#aaa" />
      </svg>
      <svg width="18" height="19" viewBox="0 0 18 19" className="ml-[13px]">
        <path d="M5 1h7v8h4l-7.5 8L1 9h4z" fill="#a9abad" stroke="#8a8c8e" />
        <path d="M11 12l5 5M16 12l-5 5" stroke="#e0302c" strokeWidth="2" />
      </svg>
      <span className="relative ml-[16px] h-[19px] w-[18px] text-[18px] font-bold leading-[22px] text-[#35507f]">
        A<span className="absolute -top-[3px] left-[11px] text-[11px] leading-4">+</span>
      </span>
      <span className="relative ml-[14px] h-[19px] w-[18px] text-[18px] font-bold leading-[22px] text-[#35507f]">
        A<span className="absolute -top-[3px] left-[11px] text-[11px] leading-4">-</span>
      </span>
      <svg width="19" height="19" viewBox="0 0 19 19" className="ml-[12px]">
        <path d="M6 .7h7L18.3 6v7L13 18.3H6L.7 13V6z" fill="#fff" stroke="#777" />
        <path d="M6.6 2.2h5.8l4.4 4.4v5.8l-4.4 4.4H6.6l-4.400-4.400V6.600z" fill="#d91b1f" />
        <path d="M6 9V6q.7-1 1.5 0V4q.8-1 1.5 0 .8-1.2 1.5 0V5q.8-1 1.5 0v4l1.5-1q1 .3.5 1.5L12 14H7.500L6 11z" fill="#fff" />
      </svg>
      <svg width="13" height="14" viewBox="0 0 13 14" className="ml-auto">
        <path d="M0 2h13M0 7h13M0 12h13" stroke="#555" strokeWidth="2.4" />
      </svg>
    </div>
  );
}

function Chrome() {
  return (
    <div className="flex h-[87px] shrink-0 flex-col border-b border-[#a8a8a8] bg-[#d4d4d4] text-[14px] text-[#333]">
      <div className="relative flex h-[25px] border-b border-[#a0a0a0] pl-[7px]">
        {tabs.map((t, i) => (
          <Tab key={i} i={i} icon={t.icon} label={t.label} />
        ))}
        <svg width="34" height="25" viewBox="0 0 34 25" className="ml-[9px] shrink-0">
          <path d="M2.5 5.5h22q2 0 3 2l4 9q1 3-2 3H9q-2 0-3-2L1 8q-1-2.5 1-2.500z" fill="#e9e9e9" stroke="#ababab" />
        </svg>
        <div className="absolute right-[5px] top-[2px] flex h-[17px] w-[25px] items-center justify-center rounded-b-[4px] border border-t-0 border-[#999] bg-[#e0e0e0]">
          <svg width="11" height="11" viewBox="0 0 11 11" fill="#fff" stroke="#555">
            <path d="M1 10V8.5Q2 6.5 4 6.3 3.2 5 3.2 3.5q0-2.5 2.3-2.5t2.3 2.5Q7.800 5 7 6.300q2 .2 3 2.200V10z" />
          </svg>
        </div>
      </div>
      <Toolbar />
      <div className="flex h-[19px] items-center pl-[7px] text-[14.8px]">
        {bookmarks.map((b) => (
          <div key={b.label} className={`flex shrink-0 items-center ${b.w}`}>
            <span className="w-[21px] shrink-0 [&>svg]:block">{b.icon}</span>
            <span className={`w-[119px] overflow-hidden whitespace-nowrap ${b.t ?? "tracking-[-0.1px]"}`}>{b.label}</span>
          </div>
        ))}
        <span className="ml-auto pr-3">»</span>
      </div>
    </div>
  );
}

/* ---------- GitHub page ---------- */
function SplitButton({ icon, label, caret, count, w }: { icon: React.ReactNode; label: string; caret?: boolean; count: string; w: string }) {
  return (
    <div className={`flex h-[26px] rounded-[3px] border border-[#d5d5d5] text-[13px] font-bold ${w}`}>
      <div className="flex flex-1 items-center justify-center gap-[4px] bg-linear-to-b from-[#fcfcfc] to-[#eee]">
        {icon}
        <span>{label}</span>
        {caret && <Caret />}
      </div>
      <div className="flex w-[21px] items-center justify-center border-l border-[#d5d5d5] bg-white text-[11px]">{count}</div>
    </div>
  );
}

const files = [
  ["screenshots", "started project", "a minute ago"],
  [".gitignore", "Initial commit", "2 minutes ago"],
  ["LICENSE", "Initial commit", "2 minutes ago"],
  ["README.md", "Initial commit", "2 minutes ago"],
  ["VocabBuilder.py", "started project", "a minute ago"],
  ["dict.txt", "started project", "a minute ago"],
  ["gradWords.txt", "started project", "a minute ago"],
  ["highScores.txt", "started project", "a minute ago"],
];

function NavItem({ d, w, label, badge }: { d: string; w?: number; label: string; badge?: string }) {
  return (
    <div className="flex h-[41px] items-center pl-[11px] pr-[10px]">
      <span className="flex w-[18.5px] pb-px text-[#999]">
        <Oct d={d} w={w} />
      </span>
      <span className="text-[#4078c0]">{label}</span>
      {badge && <span className="mb-[4px] ml-auto flex h-[15px] w-4 items-center justify-center rounded-full bg-[#eee] text-[11px] font-bold text-[#777]">{badge}</span>}
    </div>
  );
}
function NavLine() {
  return <div className="h-px bg-linear-to-r from-[#e8e8e8] via-[#eee] to-transparent" />;
}

function GitHub() {
  return (
    <div className="flex-1 overflow-hidden bg-white font-[Liberation_Sans,Arial,sans-serif] text-[13px] text-[#333]">
      <header className="h-[49px] border-b border-[#e5e5e5] bg-[#f5f5f5]">
        <div className="mx-auto flex h-12 w-[980px] items-center">
          <Oct d={P.mark} w={16} s={1.75} className="-ml-[2px]" />
          <div className="ml-[10px] flex h-7 w-[360px] items-center rounded-[3px] border border-[#ccc] bg-white pl-[2px] text-[12px]">
            <span className="flex h-[22px] w-[89px] items-center justify-center rounded-[2px] bg-[#eee] text-[#777]">This repository</span>
            <span className="ml-2 text-[#aaa]">Search</span>
          </div>
          <nav className="ml-[18px] flex gap-4 font-bold">
            <span>Pull requests</span>
            <span>Issues</span>
            <span>Gist</span>
          </nav>
          <Oct d={P.bell} className="ml-auto" />
          <div className="ml-[19px] flex items-center gap-[3px]">
            <Oct d={P.plus} w={12} className="mb-px" />
            <Caret />
          </div>
          <div className="ml-[16px] flex items-center gap-[7px]">
            <Identicon />
            <Caret />
          </div>
        </div>
      </header>
      <section className="h-[95px] border-b border-[#eee]">
        <div className="mx-auto w-[980px] pt-5">
          <div className="flex h-[26px] justify-end gap-[10px]">
            <SplitButton icon={<Oct d={P.eye} w={16} />} label="Unwatch" caret count="1" w="w-[128px]" />
            <SplitButton icon={<Oct d={P.star} />} label="Star" count="0" w="w-[86px]" />
            <SplitButton icon={<Oct d={P.fork} w={10} />} label="Fork" count="0" w="w-[85px]" />
          </div>
          <div className="-mt-[1px] flex items-center">
            <Oct d={P.repo} w={12} s={2} className="text-[#bbb]" />
            <h1 className="mb-[2px] ml-[10px] whitespace-nowrap text-[20px] leading-7 text-[#4078c0]">
              troywatson<span className="tracking-[-0.3px] text-[#666]"> / </span>
              <b>100-Words-Every-Graduate-Should-Know-Quiz-Android-App-Python-KIvy</b>
            </h1>
          </div>
        </div>
      </section>
      <div className="mx-auto flex w-[980px] justify-between">
        <main className="w-[790px] pt-5">
          <p className="h-[57px] text-[16px] leading-[22px] text-[#666]">
            <span className="whitespace-nowrap tracking-[0.04px]">
              A simple quiz engine that can easily be adapted to build your vocabulary. You can build your own dictionary
            </span>
            <br />
            files and compile your own APK using this template. — <span className="text-[#777]">Edit</span>
          </p>
          <div className="h-[48px] overflow-hidden rounded-[3px] border border-[#ddd] text-[#767676]">
            <div className="grid h-[38px] grid-cols-4">
              {[
                [<Oct d={P.history} className="mb-px text-[#999]" />, "2", "commits"],
                [<Oct d={P.branch} w={10} className="mb-px text-[#999]" />, "1", "branch"],
                [<Oct d={P.tag} className="mb-px text-[#999]" />, "0", "releases"],
                [<People />, "1", "contributor"],
              ].map(([ic, n, t], i) => (
                <div key={i} className="flex items-center justify-center gap-[3.5px]">
                  {ic}
                  <span>
                    <b className="text-[#333]">{n}</b> {t}
                  </span>
                </div>
              ))}
            </div>
            <div className="h-2 bg-[#3572a5]" />
          </div>
          <div className="mt-[10px] flex h-[26px]">
            <div className="flex w-9 items-center justify-center rounded-[3px] border border-[#5ca941] bg-linear-to-b from-[#8add6d] to-[#60b044] text-white">
              <Oct d={P.compare} className="mb-px" />
            </div>
            <div className="ml-[5px] flex w-[125px] items-center justify-center gap-[5px] rounded-[3px] border border-[#d5d5d5] bg-linear-to-b from-[#fcfcfc] to-[#eee]">
              <span>
                <span className="text-[#777]">Branch:</span> <b>master</b>
              </span>
              <Caret />
            </div>
            <div className="ml-auto flex w-[34px] items-center justify-center rounded-[3px] border border-[#d5d5d5] bg-linear-to-b from-[#fcfcfc] to-[#eee]">
              <Oct d={P.list} w={13} />
            </div>
          </div>
          <div className="mt-[9px] flex h-[31px] items-center whitespace-nowrap pb-[5px] text-[18px] text-[#4078c0]">
            <b>100-Words-Every-Graduate-Should-Know-Quiz-Android-App-Python-KIvy</b>
            <span className="mx-[5px] text-[#777]">/</span>
            <Oct d={P.plus} w={12} className="mt-[2px]" />
          </div>
          <div className="flex h-[33px] items-center rounded-t-[3px] border border-b-0 border-[#b7c7cf] bg-[#e6f1f6] pl-2 pt-px text-[#555]">started project</div>
          <div className="flex h-[30px] items-center border-x border-b border-t border-[#d8e2e7] border-x-[#c6d3da] border-b-[#eee] bg-[#f8f8f8] pl-[5px] pr-[8px] text-[12px] text-[#777]">
            <Identicon />
            <span className="ml-[7px]">
              <b className="text-[#333]">troywatson</b> authored a minute ago
            </span>
            <span className="ml-auto mr-[5px] pt-[2px] font-[Liberation_Mono,monospace] text-[#888]">
              latest commit <span className="text-[#333]">528a0e1039</span>
            </span>
            <Oct d={P.clippy} className="mb-[2px] text-[#4078c0]" />
          </div>
          <div className="border-x border-[#ddd]">
            {files.map(([n, m, a], i) => (
              <div key={n} className="flex h-[33px] items-center border-b border-[#eee] pl-[10px] pr-[10px] text-[#888]">
                <span className="w-[19px] pb-[2px]">{i === 0 ? <Oct d={P.dir} className="text-[#80a6cd]" /> : <Oct d={P.file} w={12} className="text-[#777]" />}</span>
                <span className="w-[270px] text-[#4078c0]">{n}</span>
                <span>{m}</span>
                <span className="ml-auto">{a}</span>
              </div>
            ))}
          </div>
        </main>
        <aside className="w-[170px] pt-[22px]">
          <div className="h-[341px] bg-[linear-gradient(to_right,#f9f9f9,#fff_8px)]">
            <div className="h-[18px] border-l border-[#f2f2f2]" />
            <div className="flex h-9 items-center rounded-r-[2px] border-y border-r-[3px] border-[#eee] border-r-[#d26911] bg-white pl-[12px] font-bold">
              <Oct d={P.code} className="mb-px mr-[4.5px]" />
              Code
            </div>
            <div className="border-l border-[#eee] pt-[2px]">
              <NavItem d={P.issue} label="Issues" badge="0" />
              <NavItem d={P.pull} w={12} label="Pull requests" badge="0" />
              <NavItem d={P.book} w={15} label="Wiki" />
              <div className="h-[6px]" />
              <NavLine />
              <div className="h-[7px]" />
              <NavItem d={P.pulse} label="Pulse" />
              <NavItem d={P.graph} w={16} label="Graphs" />
              <div className="h-[6px]" />
              <NavLine />
              <div className="h-[7px]" />
              <NavItem d={P.gear} label="Settings" />
              <div className="h-[10px]" />
            </div>
          </div>
          <div className="mt-[15px] text-[11px] leading-[16px] text-[#777]">
            <b className="text-[#333]">HTTPS</b> clone URL
          </div>
          <div className="mt-[3px] flex h-[26px] rounded-[3px] border border-[#d0d0d0] text-[12px]">
            <div className="flex w-[134px] items-center border-r border-[#d5d5d5] px-2">
              <span className="w-[118px] overflow-hidden whitespace-nowrap font-[Liberation_Mono,monospace]">https://github.com</span>
            </div>
            <div className="flex flex-1 items-center justify-center bg-linear-to-b from-[#fcfcfc] to-[#eee]">
              <Oct d={P.clippy} className="mb-px" />
            </div>
          </div>
          <div className="mt-[8px] h-[45px] whitespace-nowrap text-[11px] leading-[15px] text-[#777]">
            <span className="tracking-[0.04px]">
              You can clone with <span className="text-[#4078c0]">HTTPS</span>, <span className="text-[#4078c0]">SSH</span>,
            </span>
            <div className="flex items-center">
              <span className="mr-[3px]">
                or <span className="text-[#4078c0]">Subversion</span>.
              </span>
              <Oct d={P.question} s={0.75} className="mb-px text-black" />
            </div>
          </div>
          <div className="flex h-[26px] items-center justify-center gap-1 rounded-[3px] border border-[#d5d5d5] bg-linear-to-b from-[#fcfcfc] to-[#eee] font-bold">
            <Oct d={P.cloud} w={16} />
            Download ZIP
          </div>
        </aside>
      </div>
    </div>
  );
}

function Scrollbar() {
  return (
    <div className="flex w-[15px] shrink-0 flex-col items-center bg-[#f1f1f1]">
      <span className="mt-[7px] h-0 w-0 border-x-[4px] border-b-4 border-x-transparent border-b-[#999]" />
      <div className="mt-[4px] h-[340px] w-[11px] border border-[#a8a8a8] bg-[#bcbcbc]" />
      <span className="mb-[5px] mt-auto h-0 w-0 border-x-4 border-t-4 border-x-transparent border-t-[#505050]" />
    </div>
  );
}

export default function App() {
  return (
    <div className="flex h-[768px] w-[1366px] flex-col overflow-hidden bg-white font-[Noto_Sans,sans-serif]">
      <TopBar />
      <div className="flex min-h-0 flex-1">
        <div className="w-[65px] shrink-0">
          <Launcher />
        </div>
        <div className="flex min-w-0 flex-1 flex-col">
          <Chrome />
          <div className="flex min-h-0 flex-1">
            <GitHub />
            <Scrollbar />
          </div>
        </div>
      </div>
    </div>
  );
}
